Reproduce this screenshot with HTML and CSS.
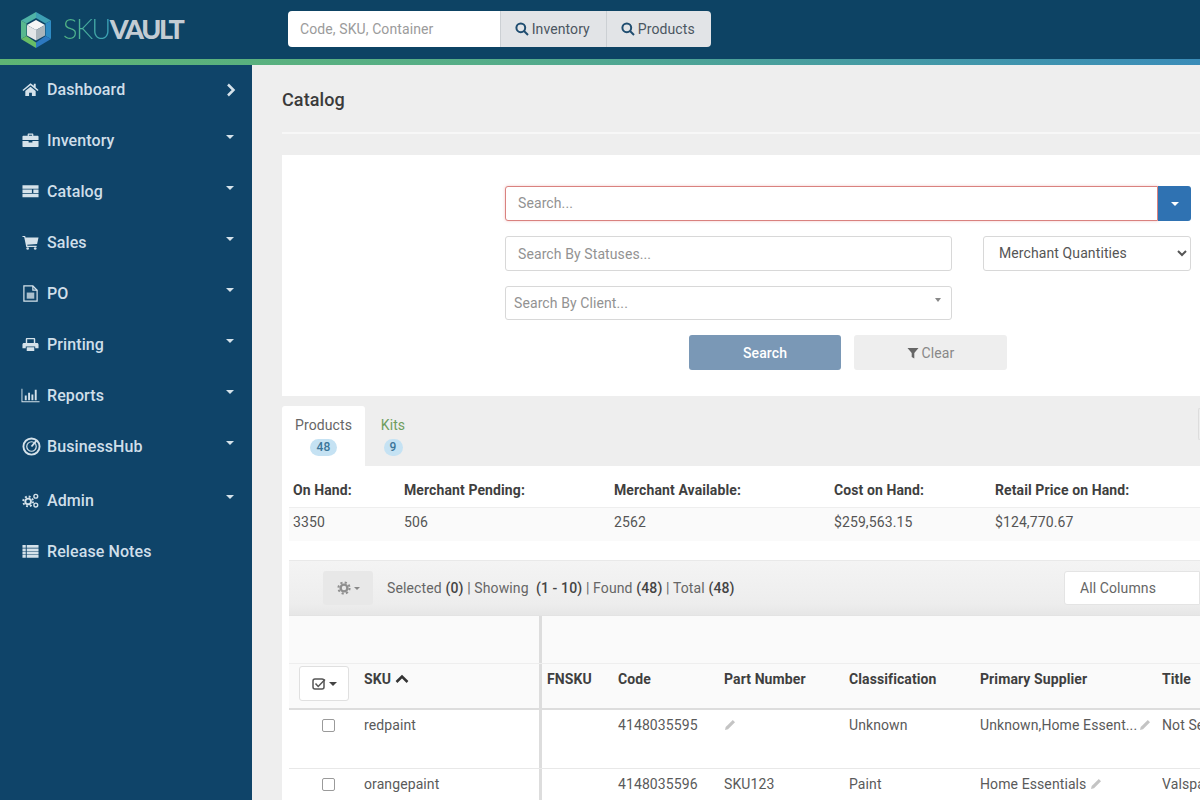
FILE: index.html
```html
<!DOCTYPE html>
<html lang="en">
<head>
<meta charset="utf-8">
<title>SkuVault Catalog</title>
<link rel="stylesheet" href="styles.css">
</head>
<body>
<header class="topbar">
  <div class="brand">
    <svg class="brand-mark" viewBox="0 0 32 36">
      <path d="M16 0 31 8.500 25.500 11.500 16 6z" fill="#3d9fb4"/>
      <path d="M16 0 1 8.500 6.500 11.500 16 6z" fill="#4fb3a6"/>
      <path d="M1 8.500V27L6.500 24V11.500z" fill="#57b88e"/>
      <path d="M31 8.500V27L25.500 24V11.500z" fill="#2f8cc4"/>
      <path d="M1 27 16 36V30.500L6.500 24z" fill="#68bd66"/>
      <path d="M31 27 16 36V30.500L25.500 24z" fill="#2d79c0"/>
      <path d="M16 8 25 13 16 18 7 13z" fill="#f6f7f7"/>
      <path d="M7 13 16 18V28.500L7 23.500z" fill="#e3e6e7"/>
      <path d="M25 13 16 18V28.500L25 23.500z" fill="#aab5bb"/>
    </svg>
    <span class="brand-name"><span class="brand-sku">SKU</span><span class="brand-vault">VAULT</span></span>
  </div>
  <form class="quick-search">
    <input class="quick-input" type="text" placeholder="Code, SKU, Container">
    <button class="quick-btn" type="button">
      <svg class="ico-search" viewBox="0 0 14 14"><circle cx="5.800" cy="5.800" r="4.400"/><path d="M9 9l4 4"/></svg>Inventory
    </button>
    <button class="quick-btn" type="button">
      <svg class="ico-search" viewBox="0 0 14 14"><circle cx="5.800" cy="5.800" r="4.400"/><path d="M9 9l4 4"/></svg>Products
    </button>
  </form>
</header>
<div class="accent"></div>
<div class="layout">
  <nav class="sidebar">
    <a class="nav-item">
      <svg class="nav-ico" viewBox="0 0 18 16"><path d="M9 1.500 0.500 8.500l1 1.200L9 3.500l7.500 6.200 1-1.200-3-2.500V2h-2v2.100zM3.500 9.500V15H7.500v-3.500h3V15h4V9.500L9 5z"/></svg>
      <span class="nav-label">Dashboard</span>
      <svg class="nav-chevron" viewBox="0 0 10 14"><path d="M2 1.500 7.500 7 2 12.500"/></svg>
    </a>
    <a class="nav-item">
      <svg class="nav-ico" viewBox="0 0 18 16"><path d="M6 3V1.500C6 1 6.500.500 7 .500h4c.5 0 1 .5 1 1V3h4.500c.5 0 1 .5 1 1v3.500H.5V4c0-.5.5-1 1-1zM7.300 3h3.400V1.800H7.300zM.5 8.500H7V10h4V8.500h6.500V14c0 .5-.5 1-1 1h-15c-.5 0-1-.5-1-1z"/></svg>
      <span class="nav-label">Inventory</span>
      <span class="caret"></span>
    </a>
    <a class="nav-item">
      <svg class="nav-ico" viewBox="0 0 18 16"><path d="M.5 1.500h17v3.500H.5zM.5 6h10v3.500H.5zM12 6h5.500v3.500H12zM.5 10.500h17v3.500H.5z"/></svg>
      <span class="nav-label">Catalog</span>
      <span class="caret"></span>
    </a>
    <a class="nav-item">
      <svg class="nav-ico" viewBox="0 0 18 16"><path d="M.5 1H3.300l.5 1.800H17.500L16 9.500 5.500 10.500l.3 1H15.500v1.300H4.500L2.300 2.300H.5z"/><circle cx="6" cy="14.300" r="1.400"/><circle cx="14" cy="14.300" r="1.400"/></svg>
      <span class="nav-label">Sales</span>
      <span class="caret"></span>
    </a>
    <a class="nav-item">
      <svg class="nav-ico" viewBox="0 0 18 18"><path class="ico-line" d="M2 1H11.500L16 5.500V17H2z"/><path class="ico-line" d="M11.500 1V5.500H16"/><path class="ico-soft" d="M5 8h8v6.500H5z"/></svg>
      <span class="nav-label">PO</span>
      <span class="caret"></span>
    </a>
    <a class="nav-item">
      <svg class="nav-ico" viewBox="0 0 18 16"><path d="M4 6.500V2.200C4 1.500 4.500 1 5.200 1h7.600c.7 0 1.200.5 1.200 1.200V6.500h-1.500V2.500h-7v4zM2 6.500h14c.8 0 1.500.7 1.500 1.500v4H14v-2H4v2H.5V8c0-.8.7-1.500 1.500-1.500zM5 11h8v4H5z"/></svg>
      <span class="nav-label">Printing</span>
      <span class="caret"></span>
    </a>
    <a class="nav-item">
      <svg class="nav-ico nav-ico-wide" viewBox="0 0 20 16"><path d="M.5 1h1v13h18v1H.5zM4 8h2v5H4zM7.500 5h2v8h-2zM11 7h2v6h-2zM14.500 2h2v11h-2z"/></svg>
      <span class="nav-label">Reports</span>
      <span class="caret"></span>
    </a>
    <a class="nav-item">
      <svg class="nav-ico nav-ico-hub" viewBox="0 0 20 20"><circle class="ico-line ico-thick" cx="10" cy="10" r="8.500"/><circle class="ico-line" cx="10" cy="10" r="5"/><path class="ico-line ico-thick" d="M10 10 15.500 3.500"/></svg>
      <span class="nav-label">BusinessHub</span>
      <span class="caret"></span>
    </a>
    <a class="nav-item nav-item-admin">
      <svg class="nav-ico" viewBox="0 0 18 16"><circle class="ico-line ico-thick" cx="6.500" cy="9" r="3"/><circle class="ico-line ico-teeth" cx="6.500" cy="9" r="5.200"/><circle class="ico-line ico-small" cx="14.600" cy="3.500" r="2"/><circle class="ico-line ico-small" cx="14.600" cy="12.800" r="2"/></svg>
      <span class="nav-label">Admin</span>
      <span class="caret"></span>
    </a>
    <a class="nav-item">
      <svg class="nav-ico" viewBox="0 0 18 16"><path d="M.5 1h3.500v3H.5zM5 1h12.500v3H5zM.5 4.700h3.500v2.700H.5zM5 4.700h12.500v2.700H5zM.5 8.100h3.500v2.700H.5zM5 8.100h12.500v2.700H5zM.5 11.500h3.500v3H.5zM5 11.500h12.500v3H5z"/></svg>
      <span class="nav-label">Release Notes</span>
    </a>
  </nav>
  <main class="main">
    <div class="page-title"><h1>Catalog</h1></div>
    <section class="search-panel">
      <div class="search-row">
        <input class="field field-main" type="text" placeholder="Search...">
        <button class="split-btn" type="button"><span class="caret caret-white"></span></button>
      </div>
      <div class="search-row search-row-between">
        <input class="field field-half" type="text" placeholder="Search By Statuses...">
        <select class="field-select"><option>Merchant Quantities</option></select>
      </div>
      <div class="search-row">
        <div class="field-fake"><span>Search By Client...</span><i class="mini-caret"></i></div>
      </div>
      <div class="search-actions">
        <button class="btn btn-search" type="button">Search</button>
        <button class="btn btn-clear" type="button">
          <svg class="ico-filter" viewBox="0 0 12 12"><path d="M.5 1h11L7.300 6v5.500L4.700 10V6z"/></svg>Clear
        </button>
      </div>
    </section>
    <div class="tabs">
      <div class="tab tab-active"><span>Products</span><b class="badge">48</b></div>
      <div class="tab tab-kits"><span>Kits</span><b class="badge">9</b></div>
      <div class="tabs-edge"></div>
    </div>
    <section class="content">
      <div class="stats stats-head">
        <span>On Hand:</span><span>Merchant Pending:</span><span>Merchant Available:</span><span>Cost on Hand:</span><span>Retail Price on Hand:</span>
      </div>
      <div class="stats stats-values">
        <span>3350</span><span>506</span><span>2562</span><span>$259,563.15</span><span>$124,770.67</span>
      </div>
      <div class="toolbar">
        <button class="gear-btn" type="button">
          <svg class="ico-gear" viewBox="0 0 14 14"><circle class="gear-hub" cx="7" cy="7" r="3.400"/><circle class="gear-teeth" cx="7" cy="7" r="5.600"/></svg><span class="caret caret-grey"></span>
        </button>
        <p class="summary">Selected <b>(0)</b> | Showing &nbsp;<b>(1 - 10)</b> | Found <b>(48)</b> | Total <b>(48)</b></p>
        <div class="columns-select">All Columns</div>
      </div>
      <div class="grid-group"><div class="frozen-blank"></div></div>
      <div class="grid-row grid-head">
        <div class="cell-check">
          <button class="check-menu" type="button">
            <svg class="ico-check" viewBox="0 0 14 14"><rect x="1" y="2" width="11" height="10" rx="2"/><path d="M3.500 6.500 6.200 9.500 13 2.500"/></svg><span class="caret caret-dark"></span>
          </button>
        </div>
        <div class="cell-sku">SKU <svg class="ico-sort" viewBox="0 0 14 10"><path d="M1.500 8 7 2.500 12.500 8"/></svg></div>
        <div class="cell-fn">FNSKU</div><div>Code</div><div>Part Number</div><div>Classification</div><div>Primary Supplier</div><div>Title</div>
      </div>
      <div class="grid-row grid-body grid-body-first">
        <div class="cell-check"><span class="checkbox"></span></div>
        <div class="cell-sku">redpaint</div>
        <div class="cell-fn"></div><div>4148035595</div>
        <div><svg class="ico-pencil" viewBox="0 0 12 12"><path d="M8.800 1 11 3.200 4 10.300 1 11l.7-3z"/></svg></div>
        <div>Unknown</div>
        <div>Unknown,Home Essent...<svg class="ico-pencil ico-pencil-tight" viewBox="0 0 12 12"><path d="M8.800 1 11 3.200 4 10.300 1 11l.7-3z"/></svg></div>
        <div>Not Set</div>
      </div>
      <div class="grid-row grid-body grid-body-next">
        <div class="cell-check"><span class="checkbox"></span></div>
        <div class="cell-sku">orangepaint</div>
        <div class="cell-fn"></div><div>4148035596</div>
        <div>SKU123</div>
        <div>Paint</div>
        <div>Home Essentials <svg class="ico-pencil" viewBox="0 0 12 12"><path d="M8.800 1 11 3.200 4 10.300 1 11l.7-3z"/></svg></div>
        <div>Valspar</div>
      </div>
    </section>
  </main>
</div>
</body>
</html>
```
FILE: styles.css
```css
* { box-sizing: border-box; }
html, body { height: 100%; }
body {
  margin: 0;
  width: 1200px;
  height: 800px;
  overflow: hidden;
  font-family: Roboto, "Liberation Sans", sans-serif;
  font-size: 14px;
  letter-spacing: .1px;
  color: #555;
  background: #eee;
}
button, input, select { font-family: inherit; letter-spacing: inherit; }

/* top bar */
.topbar {
  height: 59px;
  background: #0d4364;
  display: flex;
  align-items: center;
  padding-bottom: 2px;
}
.brand { width: 288px; padding-left: 20px; display: flex; align-items: center; gap: 11px; }
.brand-mark { width: 32px; height: 36px; flex: none; margin-top: 2px; }
.brand-name { font-family: Lato, Roboto, sans-serif; font-size: 27px; line-height: 30px; }
.brand-sku {
  font-weight: 300;
  letter-spacing: -1.500px;
  background: linear-gradient(90deg, #55b982, #3aa0b8);
  -webkit-background-clip: text;
  background-clip: text;
  color: transparent;
}
.brand-vault { font-weight: 900; color: #c3ccd3; letter-spacing: -2.200px; }
.quick-search { display: flex; height: 36px; border-radius: 4px; overflow: hidden; }
.quick-input {
  width: 212px; border: 0; padding: 0 12px; font-size: 14px; background: #fff; outline: none;
}
.quick-input::placeholder { color: #9b9b9b; opacity: 1; }
.quick-btn {
  width: 105.500px; border: 0; border-left: 1px solid #ccd0d4; background: #e2e4e7; color: #4b5661;
  font-size: 14px; display: flex; align-items: center; justify-content: center; gap: 3px; padding: 0 2px 0 0;
}
.ico-search { width: 14px; height: 14px; fill: none; stroke: #1f4d70; stroke-width: 2; }
.accent {
  height: 6px;
  background: linear-gradient(90deg, #5fb574 0%, #55ad88 40%, #3f93ad 85%, #3a8cb8 100%);
}

/* shell */
.layout { display: flex; height: 735px; }
.sidebar {
  width: 252px; flex: none; background: #0f4469; display: flex; flex-direction: column;
}
.nav-item {
  height: 51px; display: flex; align-items: center; padding: 0 15px 2px 22px; color: #cfdfe9;
  font-size: 16px; font-weight: 500;
}
.nav-item-admin { height: 54px; padding-top: 2px; }
.nav-ico { width: 17px; height: 17px; fill: #d5e2ea; flex: none; margin-right: 8px; }
.nav-ico-wide { width: 19px; margin-left: -1px; margin-right: 7px; }
.nav-ico-hub { width: 19px; height: 19px; margin-right: 6px; }
.ico-line { fill: none; stroke: #d5e2ea; stroke-width: 1.300; }
.ico-thick { stroke-width: 2; }
.ico-teeth { stroke-width: 2; stroke-dasharray: 2 2.080; }
.ico-small { stroke-width: 1.500; }
.ico-soft { fill: #a9bfcd; }
.nav-label { flex: 1; }
.nav-chevron { width: 10px; height: 14px; fill: none; stroke: #d5e2ea; stroke-width: 2.500; margin-right: 1px; }
.caret {
  width: 0; height: 0; border-left: 4px solid transparent; border-right: 4px solid transparent;
  border-top: 4px solid #d5e2ea; margin: -7px 3px 0 0;
}
.caret-white { border-top-color: #fff; margin: 0; }
.caret-grey { border-left-width: 3.500px; border-right-width: 3.500px; border-top: 3px solid #888; margin: 0; }
.caret-dark { border-top-color: #444; margin: 0; }

/* main */
.main { flex: 1; min-width: 0; padding-left: 30px; }
.page-title {
  height: 69px; border-bottom: 2px solid #f7f7f7; margin-bottom: 21px; display: flex; align-items: center; padding-top: 1px;
}
.page-title h1 { margin: 0; font-size: 18px; font-weight: 500; color: #3a3a3a; }

/* search panel */
.search-panel { height: 241px; background: #fff; padding: 31px 9px 0 223px; }
.search-row { display: flex; margin-bottom: 15px; }
.search-row-between { justify-content: space-between; }
.field {
  height: 35px; border: 1px solid #d8d8d8; border-radius: 3px; padding: 0 12px; font-size: 14px; outline: none; background: #fff;
}
.field::placeholder { color: #929292; opacity: 1; }
.field-main { width: 653px; border-color: #d9827f; box-shadow: 0 0 3px rgba(217, 90, 90, .35); border-radius: 3px 0 0 3px; padding-bottom: 2px; }
.split-btn { width: 33px; height: 35px; border: 0; background: #2f72b2; border-radius: 0 3px 3px 0; display: flex; align-items: center; justify-content: center; padding: 0; }
.field-half { width: 447px; }
.field-select {
  width: 208px; height: 35px; border: 1px solid #d8d8d8; border-radius: 3px; background: #fff; color: #555; font-size: 14px; padding: 0 11px 2px;
}
.field-fake {
  width: 447px; height: 34px; border: 1px solid #d8d8d8; border-radius: 3px; padding: 0 8px; display: flex; align-items: center; justify-content: space-between; color: #929292;
}
.mini-caret { width: 0; height: 0; border-left: 3px solid transparent; border-right: 3px solid transparent; border-top: 4px solid #888; margin: -6px 2px 0 0; }
.search-actions { display: flex; gap: 13px; padding-left: 184px; }
.btn { height: 35px; border: 0; border-radius: 3px; font-size: 14px; font-weight: 500; padding: 0; display: flex; align-items: center; justify-content: center; gap: 3px; }
.btn-search { width: 152px; background: #7a98b6; color: #fff; }
.btn-clear { width: 153px; background: #eee; color: #888; font-weight: 400; }
.ico-filter { width: 12px; height: 12px; fill: #666; }

/* tabs */
.tabs { display: flex; height: 60px; margin-top: 10px; }
.tab { display: flex; flex-direction: column; align-items: center; gap: 6px; padding: 11px 13px 0; font-size: 14px; }
.tab-active { width: 83px; background: #fff; border-radius: 3px 3px 0 0; color: #666; }
.tab-kits { width: 56px; color: #6f9d5e; padding: 11px 0 0; }
.badge {
  display: block; min-width: 19px; height: 17px; padding: 0 7px; border-radius: 9px; background: #c5e2f3; color: #3c7699; font-size: 12px; font-weight: 500; line-height: 17px; text-align: center;
}
.tab-kits .badge { padding: 0 4px; }
.tabs-edge { margin: 2px 0 0 auto; width: 2px; height: 32px; border: 1px solid #ddd; border-right: 0; border-radius: 3px 0 0 3px; }

/* content */
.content { height: 334px; background: #fff; padding-left: 7px; }
.stats { display: grid; grid-template-columns: 111px 210px 220px 161px 1fr; padding-left: 4px; align-items: center; }
.stats-head { height: 41px; font-weight: 700; color: #3f3f3f; padding-top: 7px; font-size: 14px; }
.stats-values { height: 34px; background: #fafafa; border-top: 1px solid #eee; padding-bottom: 5px; }
.toolbar {
  margin-top: 19px; height: 56px; display: flex; align-items: center; padding: 0 0 0 34px;
  background: linear-gradient(#f4f4f4, #ededed 80%, #e6e6e6); border-top: 1px solid #e9e9e9; border-bottom: 1px solid #e3e3e3;
}
.gear-btn { width: 50px; height: 34px; border: 0; background: #e8e8e8; border-radius: 3px; display: flex; align-items: center; justify-content: center; gap: 3px; padding: 0; }
.ico-gear { width: 14px; height: 14px; fill: none; stroke: #8f8f8f; }
.gear-hub { stroke-width: 2.400; }
.gear-teeth { stroke-width: 2; stroke-dasharray: 2.200 2.200; }
.summary { margin: 0 0 0 14px; flex: 1; color: #666; letter-spacing: .13px; }
.summary b { font-weight: 500; color: #444; }
.columns-select { width: 136px; height: 34px; background: #fff; border: 1px solid #e4e4e4; border-radius: 3px 0 0 3px; padding: 0 15px; line-height: 32px; color: #666; }

/* data grid */
.grid-group { height: 47px; background: #fafafa; }
.frozen-blank { width: 253px; height: 100%; border-right: 3px solid #ddd; }
.grid-row { display: grid; grid-template-columns: 75px 178px 76px 106px 125px 131px 182px 200px; }
.grid-head { height: 47px; background: #fafafa; border-top: 1px solid #eee; border-bottom: 2px solid #ddd; font-weight: 700; color: #3f3f3f; }
.grid-head > div { padding-top: 7px; white-space: nowrap; }
.grid-body { color: #5a5a5a; }
.grid-body > div { padding-top: 7px; white-space: nowrap; }
.grid-body-first { height: 59px; border-bottom: 1px solid #e8e8e8; }
.grid-body-next { height: 60px; }
.grid-head > .cell-check { padding: 2px 0 0 10px; }
.cell-sku { border-right: 3px solid #ddd; }
.cell-fn { padding-left: 5px; }
.check-menu { width: 50px; height: 35px; background: #fff; border: 1px solid #e0e0e0; border-radius: 3px; display: flex; align-items: center; justify-content: center; gap: 3px; padding: 0; }
.ico-check { width: 14px; height: 14px; fill: none; stroke: #555; stroke-width: 1.500; }
.ico-sort { width: 14px; height: 10px; fill: none; stroke: #333; stroke-width: 2.500; }
.grid-body .cell-check { padding: 9px 0 0 33px; }
.checkbox { display: block; width: 13px; height: 13px; border: 1px solid #9a9a9a; border-radius: 2px; }
.ico-pencil { width: 12px; height: 12px; fill: #c4c4c4; vertical-align: -1px; }
.ico-pencil-tight { margin-left: 2px; }
```
